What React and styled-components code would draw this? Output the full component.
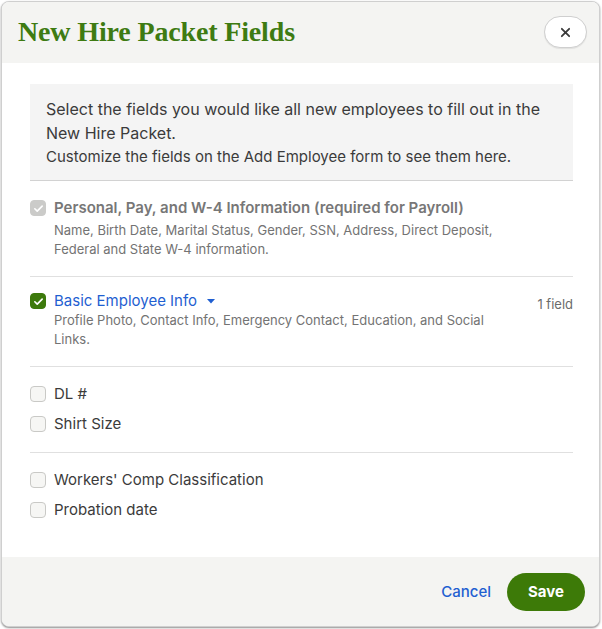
import React from "react";
import styled, { createGlobalStyle } from "styled-components";

const Global = createGlobalStyle`
  html, body { margin: 0; padding: 0; background: #fff; }
  body { font-family: Inter, "Noto Sans", sans-serif; }
`;

const Page = styled.div`
  padding: 1px 2px 3px 1px;
`;

const Modal = styled.div`
  width: 597px;
  height: 624px;
  border: 1px solid #cfcfcf;
  border-radius: 8px;
  overflow: hidden;
  background: #fff;
  display: flex;
  flex-direction: column;
  box-shadow: 0 1px 2px rgba(0, 0, 0, 0.45);
`;

const Header = styled.div`
  height: 61px;
  flex-shrink: 0;
  background: #f4f4f2;
  display: flex;
  align-items: center;
  justify-content: space-between;
  padding: 0 12px 0 16px;
`;

const Title = styled.h1`
  margin: 0 0 1px;
  font-family: "Liberation Serif", "DejaVu Serif", serif;
  font-weight: 700;
  font-size: 28px;
  color: #3e7b12;
  letter-spacing: -0.15px;
`;

const CloseButton = styled.button`
  width: 43px;
  height: 32px;
  margin-bottom: 1px;
  border: 1px solid #cfcfcf;
  border-radius: 16px;
  background: #fff;
  display: flex;
  align-items: center;
  justify-content: center;
  padding: 0;
  box-shadow: 0 1px 1px rgba(0, 0, 0, 0.08);
`;

const Body = styled.div`
  flex: 1;
  padding: 21px 26px 0 28px;
`;

const Info = styled.div`
  background: #f4f4f4;
  border-bottom: 1px solid #d2d2d2;
  padding: 13px 16px 11px 16px;
  color: #3b3b3b;
`;

const InfoMain = styled.p`
  margin: 0;
  font-size: 16px;
  line-height: 24px;
`;

const InfoSub = styled.p`
  margin: 0;
  font-size: 15px;
  line-height: 24px;
`;

const Section = styled.div`
  padding: ${(p) => p.$pad};
  border-bottom: ${(p) => (p.$last ? "none" : "1px solid #e0e0e0")};
  display: flex;
  flex-direction: column;
  gap: ${(p) => p.$gap || "0px"};
`;

const Row = styled.div`
  display: flex;
  align-items: flex-start;
  gap: 8px;
`;

const Box = styled.span`
  width: 16px;
  height: 16px;
  box-sizing: border-box;
  border-radius: 4px;
  flex-shrink: 0;
  margin-top: 2px;
  display: flex;
  align-items: center;
  justify-content: center;
  background: ${(p) =>
    p.$state === "checked" ? "#3d7a0c" : p.$state === "locked" ? "#cbcbc9" : "#f6f6f4"};
  border: 1px solid
    ${(p) =>
      p.$state === "checked" ? "#3d7a0c" : p.$state === "locked" ? "#cbcbc9" : "#c9c9c6"};
`;

const Content = styled.div`
  flex: 1;
  min-width: 0;
`;

const TitleLine = styled.div`
  height: 20px;
  display: flex;
  align-items: flex-start;
  justify-content: space-between;
`;

const FieldTitle = styled.div`
  font-size: 15px;
  line-height: 20px;
  font-weight: ${(p) => (p.$bold ? 600 : 400)};
  color: ${(p) => p.$color || "#3b3b3b"};
  display: flex;
  align-items: center;
  gap: 10px;
`;

const Desc = styled.div`
  margin-top: ${(p) => p.$mt || "0px"};
  font-size: 13px;
  line-height: 19px;
  color: #737373;
  max-width: 445px;
`;

const Count = styled.div`
  font-size: 13px;
  line-height: 19px;
  color: #6b6b6b;
  margin-top: 4px;
`;

const Footer = styled.div`
  height: 69px;
  flex-shrink: 0;
  background: #f4f4f2;
  display: flex;
  align-items: center;
  justify-content: flex-end;
  gap: 16px;
  padding: 0 14px 0 0;
`;

const CancelLink = styled.button`
  border: none;
  background: none;
  padding: 0;
  font-family: Inter, sans-serif;
  font-size: 15px;
  font-weight: 500;
  color: #1f5fd1;
`;

const SaveButton = styled.button`
  width: 78px;
  height: 38px;
  border: none;
  border-radius: 19px;
  background: #3d7a08;
  color: #fff;
  font-family: Inter, sans-serif;
  font-size: 15px;
  font-weight: 700;
`;

const Check = () => (
  <svg width="11" height="11" viewBox="0 0 12 12" fill="none">
    <path d="M2 6.3l2.6 2.6L10 3.4" stroke="#fff" strokeWidth="1.8" strokeLinecap="round" strokeLinejoin="round" />
  </svg>
);

const Checkbox = ({ state }) => (
  <Box $state={state}>{state !== "empty" && <Check />}</Box>
);

const Caret = () => (
  <svg width="8" height="5" viewBox="0 0 8 5">
    <path d="M0 0h8L4 4.5z" fill="#1f5fd1" />
  </svg>
);

const Simple = ({ label }) => (
  <Row>
    <Checkbox state="empty" />
    <FieldTitle>{label}</FieldTitle>
  </Row>
);

export default function App() {
  return (
    <Page>
      <Global />
      <Modal>
        <Header>
          <Title>New Hire Packet Fields</Title>
          <CloseButton aria-label="Close">
            <svg width="11" height="11" viewBox="0 0 12 12">
              <path d="M2 2l8 8M10 2l-8 8" stroke="#3a3a3a" strokeWidth="2" strokeLinecap="round" />
            </svg>
          </CloseButton>
        </Header>
        <Body>
          <Info>
            <InfoMain>
              Select the fields you would like all new employees to fill out in the New Hire Packet.
            </InfoMain>
            <InfoSub>Customize the fields on the Add Employee form to see them here.</InfoSub>
          </Info>
          <Section $pad="17px 0 17px">
            <Row>
              <Checkbox state="locked" />
              <Content>
                <FieldTitle $bold $color="#777">
                  Personal, Pay, and W-4 Information (required for Payroll)
                </FieldTitle>
                <Desc $mt="3px">
                  Name, Birth Date, Marital Status, Gender, SSN, Address, Direct Deposit, Federal and
                  State W-4 information.
                </Desc>
              </Content>
            </Row>
          </Section>
          <Section $pad="14px 0 17px">
            <Row>
              <Checkbox state="checked" />
              <Content>
                <TitleLine>
                  <FieldTitle $color="#1f5fd1">
                    Basic Employee Info <Caret />
                  </FieldTitle>
                  <Count>1 field</Count>
                </TitleLine>
                <Desc>
                  Profile Photo, Contact Info, Emergency Contact, Education, and Social Links.
                </Desc>
              </Content>
            </Row>
          </Section>
          <Section $pad="17px 0 18px" $gap="10px">
            <Simple label="DL #" />
            <Simple label="Shirt Size" />
          </Section>
          <Section $pad="17px 0 0" $gap="10px" $last>
            <Simple label="Workers' Comp Classification" />
            <Simple label="Probation date" />
          </Section>
        </Body>
        <Footer>
          <CancelLink>Cancel</CancelLink>
          <SaveButton>Save</SaveButton>
        </Footer>
      </Modal>
    </Page>
  );
}
